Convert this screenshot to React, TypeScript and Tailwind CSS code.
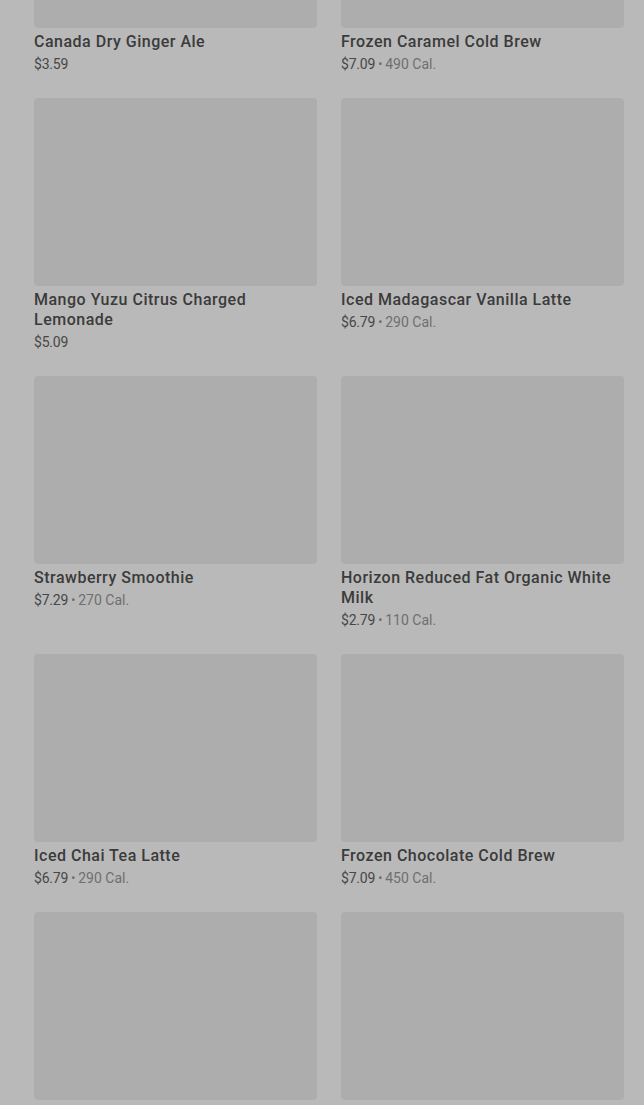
import React from "react";

type Item = {
  name: string;
  price: string;
  cal?: string;
};

const ITEMS: Item[] = [
  { name: "Canada Dry Ginger Ale", price: "$3.59" },
  { name: "Frozen Caramel Cold Brew", price: "$7.09", cal: "490 Cal." },
  { name: "Mango Yuzu Citrus Charged Lemonade", price: "$5.09" },
  { name: "Iced Madagascar Vanilla Latte", price: "$6.79", cal: "290 Cal." },
  { name: "Strawberry Smoothie", price: "$7.29", cal: "270 Cal." },
  { name: "Horizon Reduced Fat Organic White Milk", price: "$2.79", cal: "110 Cal." },
  { name: "Iced Chai Tea Latte", price: "$6.79", cal: "290 Cal." },
  { name: "Frozen Chocolate Cold Brew", price: "$7.09", cal: "450 Cal." },
  { name: "Water", price: "$2.49" },
  { name: "Cold Brew", price: "$5.29", cal: "5 Cal." },
];

function ItemCard({ item }: { item: Item }) {
  return (
    <div className="flex flex-col">
      <div className="h-[188px] w-full shrink-0 rounded-[4px] bg-[#adadad]" />
      <div className="mt-[4px] pr-[6px] text-[16px] leading-[20px] font-medium text-[#3b3b3b] tracking-[0.5px]">
        {item.name}
      </div>
      <div className="mt-[2px] flex h-[20px] items-center text-[14px] leading-[20px] text-[#474747]">
        <span className="tracking-[-0.2px]">{item.price}</span>
        {item.cal && (
          <>
            <span className="mx-[3px] text-[12px] leading-[20px] text-[#6a6a6a]">•</span>
            <span className="text-[#6f6f6f]">{item.cal}</span>
          </>
        )}
      </div>
    </div>
  );
}

export default function App() {
  return (
    <div
      className="h-[1105px] w-[644px] overflow-hidden bg-[#b9b9b9]"
      style={{ fontFamily: "Roboto, 'Noto Sans', sans-serif" }}
    >
      <div className="-mt-[160px] grid grid-cols-[283px_283px] gap-x-[24px] gap-y-[24px] pl-[34px]">
        {ITEMS.map((item) => (
          <ItemCard key={item.name} item={item} />
        ))}
      </div>
    </div>
  );
}
